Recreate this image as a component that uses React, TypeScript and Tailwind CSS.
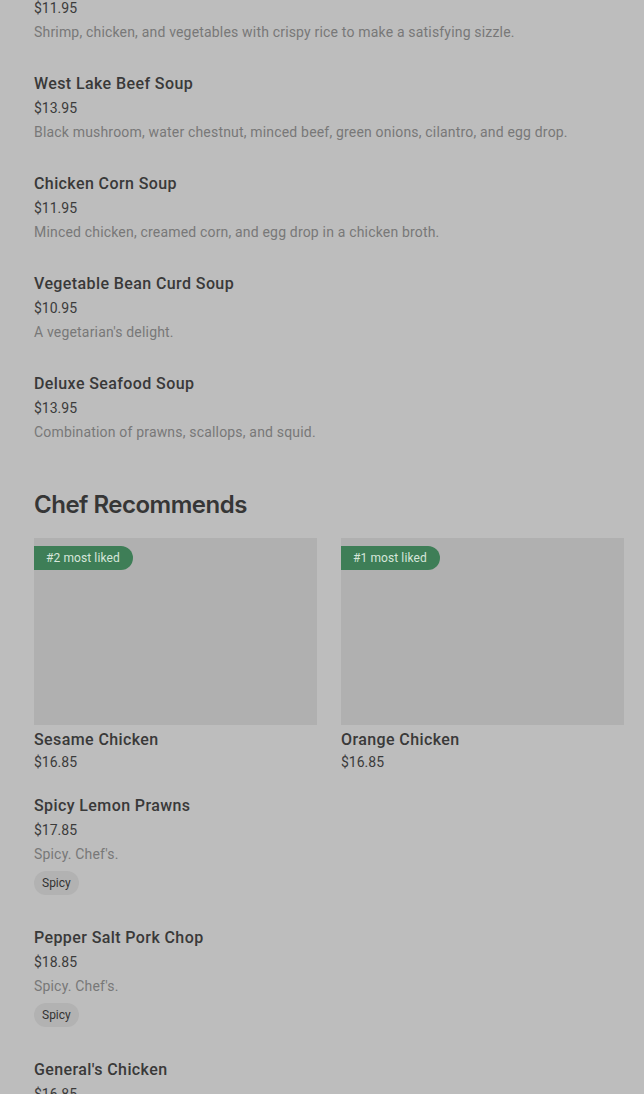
import React from "react";

type Item = { name: string; price: string; desc?: string; tag?: string };

const soups: Item[] = [
  { name: "West Lake Beef Soup", price: "$13.95", desc: "Black mushroom, water chestnut, minced beef, green onions, cilantro, and egg drop." },
  { name: "Chicken Corn Soup", price: "$11.95", desc: "Minced chicken, creamed corn, and egg drop in a chicken broth." },
  { name: "Vegetable Bean Curd Soup", price: "$10.95", desc: "A vegetarian's delight." },
  { name: "Deluxe Seafood Soup", price: "$13.95", desc: "Combination of prawns, scallops, and squid." },
];

const chef: Item[] = [
  { name: "Spicy Lemon Prawns", price: "$17.85", desc: "Spicy. Chef's.", tag: "Spicy" },
  { name: "Pepper Salt Pork Chop", price: "$18.85", desc: "Spicy. Chef's.", tag: "Spicy" },
  { name: "General's Chicken", price: "$16.85", desc: "Spicy. Chef's.", tag: "Spicy" },
];

function Row({ item }: { item: Item }) {
  return (
    <div className="flex flex-col pb-[29px]">
      <div className="pt-[1px] text-[16px] leading-[24px] font-medium tracking-[0.4px] text-[#393939]">{item.name}</div>
      <div className="mt-[2px] text-[14px] leading-[20px] text-[#3b3b3b]">{item.price}</div>
      {item.desc && (
        <div className="mt-[4px] text-[14px] leading-[20px] tracking-[0.18px] text-[#787878]">{item.desc}</div>
      )}
      {item.tag && (
        <div className="mt-[7px] mb-[1px] flex">
          <span className="rounded-full bg-[#b2b2b2] px-[8px] text-[12px] leading-[24px] text-[#333]">{item.tag}</span>
        </div>
      )}
    </div>
  );
}

function Card({ name, price, badge }: { name: string; price: string; badge: string }) {
  return (
    <div className="flex w-[283px] flex-col">
      <div className="relative h-[187px] w-full bg-[#b0b0b0]">
        <span className="absolute left-0 top-[8px] rounded-r-full bg-[#3e7e57] pl-[12px] pr-[13px] text-[12px] leading-[24px] tracking-[0.1px] text-[#d6e6db]">
          {badge}
        </span>
      </div>
      <div className="mt-[4px] text-[16px] leading-[22px] font-medium tracking-[0.4px] text-[#393939]">{name}</div>
      <div className="mt-[1px] text-[14px] leading-[20px] text-[#3b3b3b]">{price}</div>
    </div>
  );
}

export default function App() {
  return (
    <div
      className="h-[1094px] w-[644px] overflow-hidden bg-[#bdbdbd] pl-[34px] pr-[20px]"
      style={{ fontFamily: "Roboto, 'Noto Sans', sans-serif" }}
    >
      <div className="-mt-[29px]">
        <Row item={{ name: "Sizzling Rice Soup", price: "$11.95", desc: "Shrimp, chicken, and vegetables with crispy rice to make a satisfying sizzle." }} />
        {soups.map((s) => (
          <Row key={s.name} item={s} />
        ))}
      </div>
      <h2
        className="mt-[18px] text-[24px] leading-[32px] font-semibold tracking-[-0.5px] text-[#363636]"
        style={{ fontFamily: "Inter, 'Noto Sans', sans-serif" }}
      >
        Chef Recommends
      </h2>
      <div className="mt-[17px] flex gap-[24px]">
        <Card name="Sesame Chicken" price="$16.85" badge="#2 most liked" />
        <Card name="Orange Chicken" price="$16.85" badge="#1 most liked" />
      </div>
      <div className="mt-[21px]">
        {chef.map((c) => (
          <Row key={c.name} item={c} />
        ))}
      </div>
    </div>
  );
}
